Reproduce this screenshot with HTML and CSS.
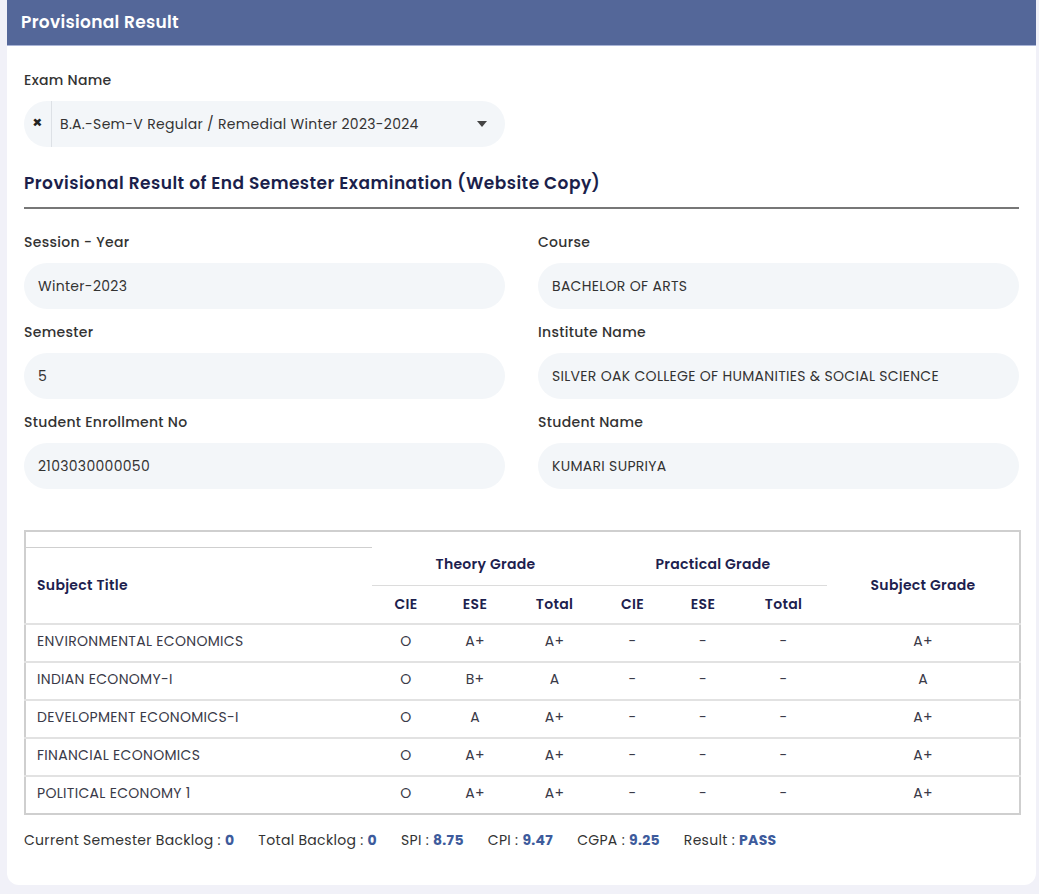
FILE: index.html
```html
<!DOCTYPE html>
<html lang="en">
<head>
<meta charset="utf-8">
<title>Provisional Result</title>
<link rel="stylesheet" href="styles.css">
</head>
<body>
<div class="card">
  <div class="card-header">Provisional Result</div>
  <div class="card-body">
    <div class="label">Exam Name</div>
    <div class="select">
      <span class="clear">&#215;</span>
      <span class="sel-text">B.A.-Sem-V Regular / Remedial Winter 2023-2024</span>
      <svg class="caret" width="10" height="6" viewBox="0 0 10 6"><path d="M0 0h10L5 6z" fill="#444"/></svg>
    </div>

    <h2 class="section-title">Provisional Result of End Semester Examination (Website Copy)</h2>

    <div class="grid">
      <div class="field">
        <div class="label">Session - Year</div>
        <div class="input">Winter-2023</div>
      </div>
      <div class="field">
        <div class="label">Course</div>
        <div class="input">BACHELOR OF ARTS</div>
      </div>
      <div class="field">
        <div class="label">Semester</div>
        <div class="input">5</div>
      </div>
      <div class="field">
        <div class="label">Institute Name</div>
        <div class="input">SILVER OAK COLLEGE OF HUMANITIES &amp; SOCIAL SCIENCE</div>
      </div>
      <div class="field">
        <div class="label">Student Enrollment No</div>
        <div class="input">2103030000050</div>
      </div>
      <div class="field">
        <div class="label">Student Name</div>
        <div class="input">KUMARI SUPRIYA</div>
      </div>
    </div>

    <table class="result">
      <colgroup>
        <col class="c-title"><col class="c1"><col class="c2"><col class="c3"><col class="c4"><col class="c5"><col class="c6"><col class="c-grade">
      </colgroup>
      <thead>
        <tr class="blank"><td class="blank-first"></td><td colspan="7"></td></tr>
        <tr class="h1">
          <th rowspan="2" class="th-title">Subject Title</th>
          <th colspan="3" class="group">Theory Grade</th>
          <th colspan="3" class="group">Practical Grade</th>
          <th rowspan="2">Subject Grade</th>
        </tr>
        <tr class="h2">
          <th>CIE</th><th>ESE</th><th>Total</th><th>CIE</th><th>ESE</th><th>Total</th>
        </tr>
      </thead>
      <tbody>
        <tr><td class="subj">ENVIRONMENTAL ECONOMICS</td><td>O</td><td>A+</td><td>A+</td><td>-</td><td>-</td><td>-</td><td>A+</td></tr>
        <tr><td class="subj">INDIAN ECONOMY-I</td><td>O</td><td>B+</td><td>A</td><td>-</td><td>-</td><td>-</td><td>A</td></tr>
        <tr><td class="subj">DEVELOPMENT ECONOMICS-I</td><td>O</td><td>A</td><td>A+</td><td>-</td><td>-</td><td>-</td><td>A+</td></tr>
        <tr><td class="subj">FINANCIAL ECONOMICS</td><td>O</td><td>A+</td><td>A+</td><td>-</td><td>-</td><td>-</td><td>A+</td></tr>
        <tr><td class="subj">POLITICAL ECONOMY 1</td><td>O</td><td>A+</td><td>A+</td><td>-</td><td>-</td><td>-</td><td>A+</td></tr>
      </tbody>
    </table>

    <div class="summary">
      <span>Current Semester Backlog : <b>0</b></span>
      <span>Total Backlog : <b>0</b></span>
      <span>SPI : <b>8.75</b></span>
      <span>CPI : <b>9.47</b></span>
      <span>CGPA : <b>9.25</b></span>
      <span>Result : <b>PASS</b></span>
    </div>
  </div>
</div>
</body>
</html>
```

FILE: styles.css
```css
html, body {
  margin: 0;
  padding: 0;
  background: #f1f1f8;
}
body {
  font-family: "Poppins", Inter, "Noto Sans", sans-serif;
  color: #333;
  letter-spacing: 0.3px;
  height: 894px;
  overflow: hidden;
}
.card {
  margin-left: 7px;
  width: 1029px;
  height: 885px;
  background: #fff;
  border-radius: 0 0 12px 12px;
  box-sizing: border-box;
}
.card-header {
  height: 46px;
  background: #546799;
  color: #fff;
  font-weight: 600;
  font-size: 17px;
  line-height: 44px;
  padding-left: 14px;
  border-bottom: 1px solid #a9b4d6;
  box-sizing: border-box;
}
.card-body {
  padding: 24px 17px 0 17px;
}
.label {
  font-size: 14px;
  line-height: 20px;
  color: #333;
  font-weight: 500;
}
.select {
  margin-top: 11px;
  width: 481px;
  height: 46px;
  border-radius: 23px;
  background: #f3f6f9;
  display: flex;
  align-items: center;
  box-sizing: border-box;
}
.clear {
  width: 28px;
  text-align: center;
  font-weight: 700;
  font-size: 16px;
  color: #222;
  border-right: 1px solid #dde1e6;
  height: 46px;
  line-height: 44px;
  box-sizing: border-box;
}
.sel-text {
  flex: 1;
  padding-left: 8px;
  font-size: 14px;
  color: #333;
}
.caret {
  margin-right: 18px;
}
.section-title {
  margin: 24px 0 0 0;
  font-size: 17px;
  line-height: 24px;
  font-weight: 600;
  letter-spacing: 0.45px;
  color: #1b1f4b;
  padding-bottom: 12px;
  border-bottom: 2px solid #777;
}
.grid {
  margin-top: 23px;
  display: grid;
  grid-template-columns: 481px 481px;
  column-gap: 33px;
  row-gap: 13px;
}
.field .input {
  margin-top: 11px;
  height: 46px;
  border-radius: 23px;
  background: #f3f6f9;
  display: flex;
  align-items: center;
  padding-left: 14px;
  font-size: 14px;
  color: #333;
}
.result {
  margin-top: 41px;
  width: 995px;
  table-layout: fixed;
  border-collapse: collapse;
  border: 2px solid #cfcfcf;
  font-size: 14px;
}
.c-title { width: 347px; }
.c1 { width: 68px; }
.c2 { width: 70px; }
.c3 { width: 89px; }
.c4 { width: 67px; }
.c5 { width: 74px; }
.c6 { width: 87px; }
.c-grade { width: 193px; }
.result tr.blank td {
  height: 15px;
  padding: 0;
}
.result td.blank-first {
  border-bottom: 1px solid #cfcfcf;
}
.result th {
  color: #1d214e;
  font-weight: 600;
  text-align: center;
  padding: 0;
}
.result tr.h1 th.group {
  height: 33px;
  padding-bottom: 4px;
}
.result tr.h2 th { height: 37px; }
.result th.group {
  border-bottom: 1px solid #dcdcdc;
}
.result th.th-title {
  text-align: left;
  padding-left: 11px;
}
.result thead {
  border-bottom: 2px solid #d6d6d6;
}
.result tbody td {
  height: 34px;
  padding: 0 0 2px 0;
  text-align: center;
  color: #3a3a48;
  border-top: 2px solid #e2e2e2;
}
.result tbody td.subj {
  text-align: left;
  padding-left: 11px;
}
.summary {
  margin-top: 15px;
  display: flex;
  gap: 24px;
  font-size: 14px;
  line-height: 20px;
  color: #333;
}
.summary b {
  color: #3d5b9c;
  font-weight: 700;
}
```
